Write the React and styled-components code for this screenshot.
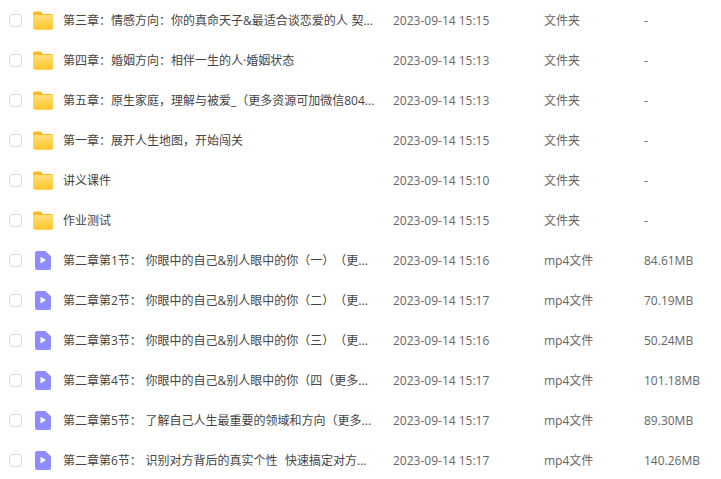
import React from "react";
import styled, { createGlobalStyle } from "styled-components";

const Global = createGlobalStyle`
  html, body { margin: 0; padding: 0; background: #fff; }
  body { font-family: "Open Sans", "Noto Sans CJK SC", sans-serif; overflow: hidden; }
`;

const List = styled.div`
  width: 721px;
  height: 479px;
  overflow: hidden;
`;

const Row = styled.div`
  display: flex;
  align-items: center;
  height: 40px;
  padding-left: 9px;
  font-size: 12px;
  color: #666;
  text-spacing-trim: space-all;
`;

const Check = styled.span`
  flex: none;
  box-sizing: border-box;
  width: 13px;
  height: 13px;
  margin: 1px 11px 0 0;
  border: 1px solid #dcdcdc;
  border-radius: 3px;
  background: #fff;
`;

const IconBox = styled.span`
  flex: none;
  display: flex;
  justify-content: center;
  width: 20px;
  margin-right: 10px;
`;

const Name = styled.span`
  flex: none;
  box-sizing: border-box;
  width: 330px;
  padding-right: 10px;
  color: #444;
  white-space: pre;
  word-spacing: 0.6px;
  overflow: hidden;
`;

const DateCell = styled.span`
  flex: none;
  width: 151px;
`;

const TypeCell = styled.span`
  flex: none;
  width: 100px;
`;

const SizeCell = styled.span`
  flex: none;
`;

const FolderIcon = () => (
  <svg width="20" height="19" viewBox="0 0 20 19">
    <defs>
      <linearGradient id="folderBody" x1="0" y1="0" x2="0" y2="1">
        <stop offset="0" stopColor="#ffe07a" />
        <stop offset="1" stopColor="#ffc62e" />
      </linearGradient>
    </defs>
    <path d="M0 2.500C0 1.200.8.500 2 .5h5c.8 0 1.200.3 1.700.9L10 3h8c1.200 0 2 .8 2 2v11.500c0 1.200-.8 2-2 2H2c-1.200 0-2-.8-2-2z" fill="#ffb81f" />
    <path d="M0 6c0-1.200.8-2 2-2h16c1.200 0 2 .8 2 2v10.500c0 1.200-.8 2-2 2H2c-1.200 0-2-.8-2-2z" fill="url(#folderBody)" />
  </svg>
);

const VideoIcon = () => (
  <svg width="16" height="19" viewBox="0 0 16 19">
    <path d="M2 0h8.500L16 5.500V17c0 1.200-.8 2-2 2H2c-1.200 0-2-.8-2-2V2C0 .8.800 0 2 0z" fill="#8f8cff" />
    <path d="M5.500 5.800v6.600l5.500-3.300z" fill="#fff" />
  </svg>
);

const rows = [
  { kind: "folder", name: "第三章：情感方向：你的真命天子&最适合谈恋爱的人 契...", date: "2023-09-14 15:15", type: "文件夹", size: "-" },
  { kind: "folder", name: "第四章：婚姻方向：相伴一生的人·婚姻状态", date: "2023-09-14 15:13", type: "文件夹", size: "-" },
  { kind: "folder", name: "第五章：原生家庭，理解与被爱_（更多资源可加微信804...", date: "2023-09-14 15:13", type: "文件夹", size: "-" },
  { kind: "folder", name: "第一章：展开人生地图，开始闯关", date: "2023-09-14 15:15", type: "文件夹", size: "-" },
  { kind: "folder", name: "讲义课件", date: "2023-09-14 15:10", type: "文件夹", size: "-" },
  { kind: "folder", name: "作业测试", date: "2023-09-14 15:15", type: "文件夹", size: "-" },
  { kind: "video", name: "第二章第1节： 你眼中的自己&别人眼中的你（一）（更...", date: "2023-09-14 15:16", type: "mp4文件", size: "84.61MB" },
  { kind: "video", name: "第二章第2节： 你眼中的自己&别人眼中的你（二）（更...", date: "2023-09-14 15:17", type: "mp4文件", size: "70.19MB" },
  { kind: "video", name: "第二章第3节： 你眼中的自己&别人眼中的你（三）（更...", date: "2023-09-14 15:16", type: "mp4文件", size: "50.24MB" },
  { kind: "video", name: "第二章第4节： 你眼中的自己&别人眼中的你（四（更多...", date: "2023-09-14 15:17", type: "mp4文件", size: "101.18MB" },
  { kind: "video", name: "第二章第5节： 了解自己人生最重要的领域和方向（更多...", date: "2023-09-14 15:17", type: "mp4文件", size: "89.30MB" },
  { kind: "video", name: "第二章第6节： 识别对方背后的真实个性  快速搞定对方...", date: "2023-09-14 15:17", type: "mp4文件", size: "140.26MB" },
];

export default function App() {
  return (
    <List>
      <Global />
      {rows.map((row, index) => (
        <Row key={index}>
          <Check />
          <IconBox>{row.kind === "folder" ? <FolderIcon /> : <VideoIcon />}</IconBox>
          <Name>{row.name}</Name>
          <DateCell>{row.date}</DateCell>
          <TypeCell>{row.type}</TypeCell>
          <SizeCell>{row.size}</SizeCell>
        </Row>
      ))}
    </List>
  );
}
